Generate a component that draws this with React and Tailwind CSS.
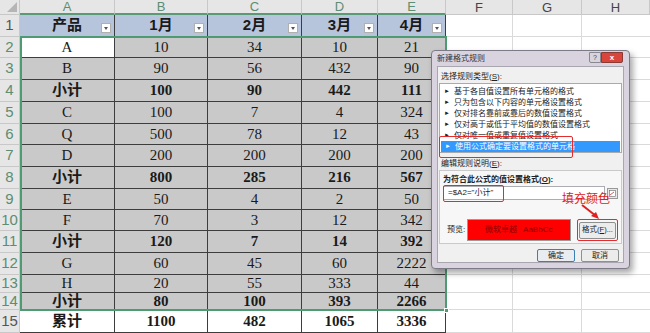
import React from 'react';

const rows = [
  { h: 22, cells: ['产品', '1月', '2月', '3月', '4月'], kind: 'head' },
  { h: 21, cells: ['A', '10', '34', '10', '21'] },
  { h: 22, cells: ['B', '90', '56', '432', '90'] },
  { h: 22, cells: ['小计', '100', '90', '442', '111'], bold: true },
  { h: 22, cells: ['C', '100', '7', '4', '324'] },
  { h: 21, cells: ['Q', '500', '78', '12', '43'] },
  { h: 22, cells: ['D', '200', '200', '200', '200'] },
  { h: 22, cells: ['小计', '800', '285', '216', '567'], bold: true },
  { h: 21, cells: ['E', '50', '4', '2', '50'] },
  { h: 21, cells: ['F', '70', '3', '12', '342'] },
  { h: 22, cells: ['小计', '120', '7', '14', '392'], bold: true },
  { h: 22, cells: ['G', '60', '45', '60', '2222'] },
  { h: 18, cells: ['H', '20', '55', '333', '44'] },
  { h: 17, cells: ['小计', '80', '100', '393', '2266'], bold: true },
  { h: 23, cells: ['累计', '1100', '482', '1065', '3336'], bold: true, kind: 'total' },
];

const widths = ['w-[95px]', 'w-[93px]', 'w-[94px]', 'w-[76px]', 'w-[68px]'];
const colLetters = [
  ['A', 'w-[95px]', true], ['B', 'w-[93px]', true], ['C', 'w-[94px]', true],
  ['D', 'w-[76px]', true], ['E', 'w-[68px]', true], ['F', 'w-[67px]', false],
  ['G', 'w-[69px]', false], ['H', 'w-[68px]', false],
];

const serif = { fontFamily: '"Liberation Serif", "Noto Sans CJK SC", serif' };
const sans = { fontFamily: '"Liberation Sans", "Noto Sans CJK SC", sans-serif' };

function FilterBtn() {
  return (
    <span className="absolute right-[3px] bottom-[3px] w-[10px] h-[10px] bg-white border border-[#b0b0b0] flex items-center justify-center">
      <span className="w-0 h-0 border-l-[2.5px] border-r-[2.5px] border-t-[3px] border-l-transparent border-r-transparent border-t-[#555]" />
    </span>
  );
}

function Row({ row, index }) {
  const num = index + 1;
  const sel = num >= 2 && num <= 14;
  return (
    <div className="flex" style={{ height: row.h }}>
      <div className={`w-[20px] shrink-0 bg-[#e6e6e6] border-r border-b border-[#c8c8c8] flex items-center justify-center text-[15px] ${sel ? 'text-[#5d8d72]' : 'text-[#555]'}`} style={sans}>
        {num}
      </div>
      {row.cells.map((c, i) => {
        let bg = 'bg-[#c9c9c9]';
        if (row.kind === 'head') bg = 'bg-[#b6c5dc]';
        if (row.kind === 'total') bg = 'bg-white';
        if (num === 2 && i === 0) bg = 'bg-white';
        const bold = row.bold || row.kind === 'head';
        return (
          <div key={i} className={`${widths[i]} shrink-0 relative ${bg} border-r border-b border-[#3d3d3d] flex items-center justify-center text-[15px] text-[#1a1a1a] ${bold ? 'font-bold' : ''}`}
            style={row.kind === 'head' ? sans : serif}>
            {c}
            {row.kind === 'head' && <FilterBtn />}
          </div>
        );
      })}
      <div className="w-[67px] shrink-0 bg-white border-r border-b border-[#dadada]" />
      <div className="w-[69px] shrink-0 bg-white border-r border-b border-[#dadada]" />
      <div className="w-[68px] shrink-0 bg-white border-b border-[#dadada]" />
    </div>
  );
}

function Dialog() {
  const items = [
    '基于各自值设置所有单元格的格式',
    '只为包含以下内容的单元格设置格式',
    '仅对排名靠前或靠后的数值设置格式',
    '仅对高于或低于平均值的数值设置格式',
    '仅对唯一值或重复值设置格式',
    '使用公式确定要设置格式的单元格',
  ];
  return (
    <div className="absolute left-[431px] top-[50px] w-[199px] h-[219px] rounded-[4px] border border-[#7d7a88] bg-[#d9d2df] shadow-[3px_4px_6px_rgba(0,0,0,0.35)] flex flex-col text-[8px] text-[#222]"
      style={sans}>
      {/* 标题栏 */}
      <div className="h-[15px] flex items-center justify-between pl-[5px] pr-[6px]">
        <span className="text-[#333]">新建格式规则</span>
        <div className="flex h-[11px] -mt-[3px]">
          <span className="w-[12px] h-full bg-[#d8d4dc] border border-[#8a8790] rounded-bl-[2px] text-[7px] leading-[9px] text-center text-[#444]">?</span>
          <span className="w-[22px] h-full bg-[#d9453a] border border-[#8a3a34] rounded-br-[2px] text-[8px] leading-[9px] text-center text-white font-bold">x</span>
        </div>
      </div>
      {/* 内容 */}
      <div className="flex-1 mx-[5px] mb-[5px] bg-[#f0f0f0] border border-[#a9a6b0] px-[1px] pt-[4px] flex flex-col">
        <div className="pl-[2px] h-[11px] leading-[11px]">选择规则类型(<u>S</u>):</div>
        <div className="relative mt-[1px] h-[70px] bg-white border border-[#aaa] pt-[2px] flex flex-col">
          {items.map((t, i) => (
            <div key={i} className={`h-[11px] leading-[11px] flex items-center pl-[4px] ${i === 5 ? 'bg-[#3399ff] text-white mx-[1px]' : ''}`}>
              <span className="text-[6px] mr-[4px]">►</span>{t}
            </div>
          ))}
          <div className="absolute left-[-1px] top-[52px] w-[134px] h-[22px] border-[1.5px] border-[#e52b2b] rounded-[2px]" />
        </div>
        <div className="pl-[2px] mt-[5px] h-[11px] leading-[11px]">编辑规则说明(<u>E</u>):</div>
        <div className="relative mt-[1px] bg-[#f7f7f7] border border-[#c9c9c9] h-[74px] px-[3px] pt-[3px]">
          <div className="font-bold h-[11px] leading-[11px]">为符合此公式的值设置格式(<u>O</u>):</div>
          <div className="mt-[1px] flex items-center gap-[2px]">
            <div className="flex-1 h-[14px] bg-white border border-[#abadb3] pl-[4px] leading-[12px]">=$A2="小计"</div>
            <div className="w-[11px] h-[11px] bg-[#e8e8e8] border border-[#999] flex items-center justify-center">
              <svg width="7" height="7" viewBox="0 0 7 7"><rect x="0.5" y="0.5" width="6" height="6" fill="#fff" stroke="#666" strokeWidth="0.6" /><path d="M1 5l4-3" stroke="#c33" strokeWidth="0.8" /></svg>
            </div>
          </div>
          <div className="absolute left-[3px] top-[14px] w-[61px] h-[17px] border-[1.5px] border-[#e52b2b] rounded-[2px]" />
          <div className="mt-[19px] flex items-center">
            <span className="w-[24px] pl-[4px]">预览:</span>
            <div className="w-[107px] h-[22px] bg-[#ff0000] border border-[#9a9a9a] flex items-center justify-center gap-[6px] text-[#8a0000]">
              <span>微软卓越</span><span>AaBbCc</span>
            </div>
            <div className="ml-[6px] w-[42px] h-[22px] border-[1.5px] border-[#e52b2b] rounded-[2px] flex items-center justify-center">
              <div className="w-[37px] h-[17px] bg-[#ececec] border border-[#8e8f8f] rounded-[2px] flex items-center justify-center text-[7.5px]">格式(<u>F</u>)...</div>
            </div>
          </div>
          <span className="absolute left-[122px] top-[21px] text-[12px] text-[#e02020] leading-none" style={{ fontFamily: '"Noto Sans CJK SC", sans-serif' }}>填充颜色</span>
          <svg className="absolute left-[140px] top-[33px]" width="22" height="16" viewBox="0 0 22 16">
            <path d="M2 1 L16 12" stroke="#e02020" strokeWidth="2" />
            <path d="M19 15 L11 12 L16 8 Z" fill="#e02020" />
          </svg>
        </div>
        <div className="flex justify-end gap-[6px] mt-[5px] pr-[3px]">
          <div className="w-[38px] h-[13px] bg-[#e9edf1] border border-[#3c7fb1] rounded-[2px] flex items-center justify-center">确定</div>
          <div className="w-[38px] h-[13px] bg-[#ececec] border border-[#8e8f8f] rounded-[2px] flex items-center justify-center">取消</div>
        </div>
      </div>
    </div>
  );
}

export default function App() {
  return (
    <div className="relative w-[650px] h-[333px] overflow-hidden bg-white">
      {/* 列标题 */}
      <div className="flex h-[15px]">
        <div className="w-[20px] shrink-0 bg-[#e6e6e6] border-r border-b border-[#c8c8c8] relative">
          <span className="absolute right-[2px] bottom-[2px] w-0 h-0 border-b-[10px] border-l-[10px] border-b-[#b5b5b5] border-l-transparent" />
        </div>
        {colLetters.map(([l, w, s]) => (
          <div key={l} className={`${w} shrink-0 bg-[#e6e6e6] border-r border-[#c8c8c8] flex items-center justify-center text-[13px] leading-none ${s ? 'text-[#5d8d72] border-b-2 border-b-[#5a9a76] bg-[#dcdcdc]' : 'text-[#444] border-b'}`} style={sans}>
            {l}
          </div>
        ))}
      </div>
      {rows.map((r, i) => <Row key={i} row={r} index={i} />)}

      {/* 选区 */}
      <div className="absolute left-[20px] top-[36px] w-[427px] h-[275px] border-2 border-[#4e9a73] pointer-events-none" />
      <div className="absolute left-[444px] top-[308px] w-[5px] h-[5px] bg-[#4e9a73] border border-white" />

      <Dialog />
    </div>
  );
}
